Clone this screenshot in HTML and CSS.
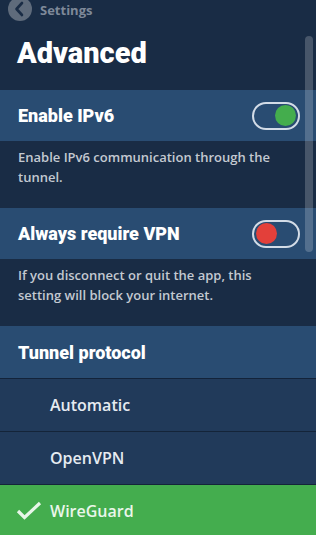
FILE: index.html
```html
<!DOCTYPE html>
<html>
<head>
<meta charset="utf-8">
<link rel="stylesheet" href="styles.css">
</head>
<body>
<div class="app">
  <div class="topbar">
    <span class="back">
      <svg width="24" height="24" viewBox="0 0 24 24"><path d="M14 6 L8.5 12 L14 18" fill="none" stroke="#1a2c45" stroke-width="2.6" stroke-linecap="round" stroke-linejoin="round"/></svg>
    </span>
    <span class="crumb">Settings</span>
  </div>
  <h1 class="title">Advanced</h1>

  <div class="row">
    <span class="label">Enable IPv6</span>
    <span class="toggle on"><span class="knob"></span></span>
  </div>
  <p class="desc">Enable IPv6 communication through the tunnel.</p>

  <div class="row">
    <span class="label">Always require VPN</span>
    <span class="toggle off"><span class="knob"></span></span>
  </div>
  <p class="desc">If you disconnect or quit the app, this setting will block your internet.</p>

  <div class="row section">
    <span class="label">Tunnel protocol</span>
  </div>
  <div class="option">Automatic</div>
  <div class="option">OpenVPN</div>
  <div class="option selected">
    <svg class="check" width="26" height="20" viewBox="0 0 26 20"><path d="M2 10 L8.5 16.5 L24 2" fill="none" stroke="#e8f6e9" stroke-width="3.2"/></svg>
    WireGuard
  </div>

  <div class="scroll-thumb"></div>
</div>
</body>
</html>
```
FILE: styles.css
```css
html, body {
  margin: 0;
  padding: 0;
  background: #192c45;
}
.app {
  position: relative;
  width: 316px;
  height: 535px;
  overflow: hidden;
  background: #192c45;
  font-family: "Open Sans", "Noto Sans", sans-serif;
  color: #fff;
}
.topbar {
  display: flex;
  align-items: center;
  height: 20px;
  padding-left: 8px;
  gap: 8px;
}
.back {
  width: 24px;
  height: 24px;
  border-radius: 50%;
  background: #5f6b7b;
  margin-top: -3px;
  display: flex;
}
.crumb {
  font-size: 13px;
  font-weight: 700;
  color: #7e8999;
}
.title {
  margin: 16px 0 0 17px;
  height: 54px;
  font-family: "Roboto", "Open Sans", sans-serif;
  font-weight: 900;
  font-size: 29px;
  line-height: 34px;
  color: #fff;
}
.row {
  display: flex;
  align-items: center;
  justify-content: space-between;
  height: 51px;
  background: #294c72;
  padding: 0 16px 0 18px;
}
.label {
  font-family: "Roboto", "Open Sans", sans-serif;
  font-weight: 900;
  font-size: 18px;
  color: #fff;
}
.toggle {
  box-sizing: border-box;
  width: 48px;
  height: 28px;
  border: 2px solid #d3dce7;
  border-radius: 14px;
  display: flex;
  align-items: center;
  padding: 0 2px;
}
.toggle.on { justify-content: flex-end; }
.toggle.off { justify-content: flex-start; }
.knob {
  width: 21px;
  height: 21px;
  border-radius: 50%;
}
.on .knob { background: #44ad4d; }
.off .knob { background: #e3403a; }
.desc {
  margin: 0;
  height: 67px;
  box-sizing: border-box;
  padding: 7px 36px 0 18px;
  font-size: 13px;
  font-weight: 600;
  line-height: 19.5px;
  color: #c3c9d1;
}
.section {
  height: 52px;
  border-bottom: 1px solid #13233a;
}
.option {
  display: flex;
  align-items: center;
  height: 52px;
  padding-left: 50px;
  background: #213a5a;
  border-bottom: 1px solid #142439;
  font-size: 16px;
  font-weight: 600;
  color: #e6ebf1;
}
.option.selected {
  background: #44ad4e;
  border-bottom: none;
  padding-left: 16px;
  gap: 8px;
  color: #eaf6ea;
}
.check { flex: none; }
.scroll-thumb {
  position: absolute;
  left: 305px;
  top: 36px;
  width: 8px;
  height: 216px;
  border-radius: 4px;
  background: rgba(255, 255, 255, 0.2);
}
```
